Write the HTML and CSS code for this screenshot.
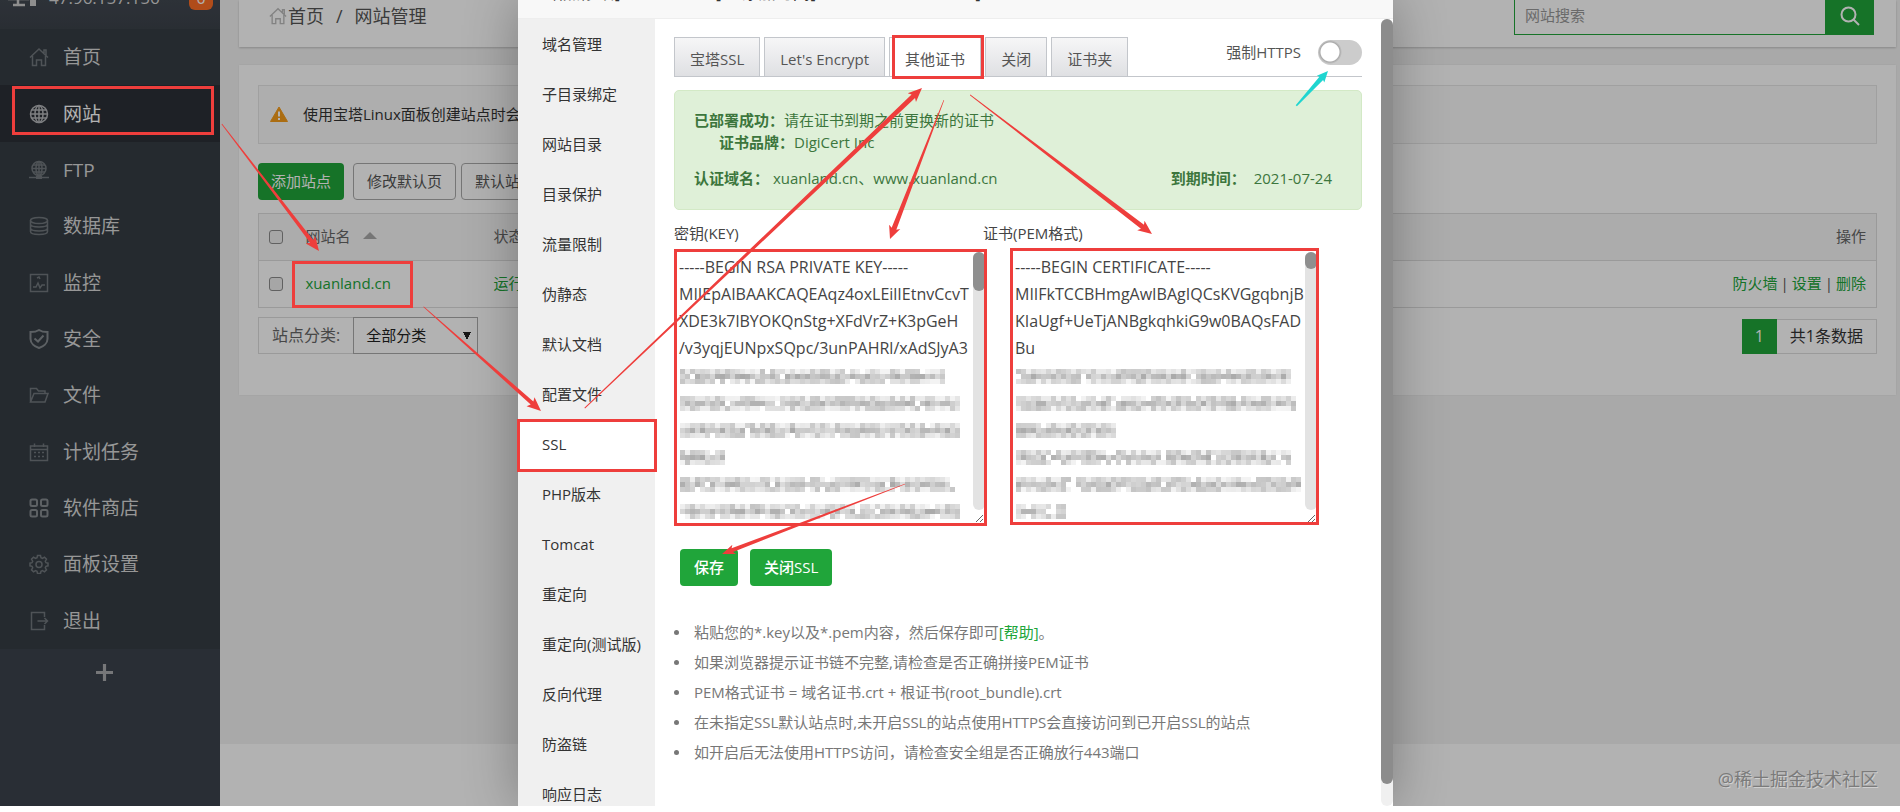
FILE: index.html
```html
<!DOCTYPE html>
<html lang="zh-CN">
<head>
<meta charset="utf-8">
<title>网站管理</title>
<link rel="stylesheet" href="styles.css">
</head>
<body>
<div class="screen">
  <aside class="sidebar">
    <div class="server">
      <svg class="server-icon" viewBox="0 0 28 24" aria-hidden="true"><path d="M1 2h19v14H1zM10 16v5M5 22h12" fill="none" stroke="currentColor" stroke-width="2.500"/><path d="M22 4h6v19h-6z" fill="currentColor"/></svg>
      <span class="server-ip">47.96.157.156</span>
      <span class="server-badge">0</span>
    </div>
    <nav class="menu">
      <a href="#"><svg viewBox="0 0 20 20"><path d="M1 10.500 10 2l9 8.500M15 6V3h2v5M3.500 9v9.500h4V13h5v5.500h4V9"/></svg>首页</a>
      <a href="#" class="active"><svg viewBox="0 0 20 20"><circle cx="10" cy="10" r="8.500"/><ellipse cx="10" cy="10" rx="4" ry="8.500"/><path d="M10 1.500v17M1.500 10h17M3 6h14M3 14h14"/></svg>网站</a>
      <a href="#"><svg viewBox="0 0 20 20"><circle cx="10" cy="8.500" r="7"/><ellipse cx="10" cy="8.500" rx="3" ry="7"/><path d="M10 1.500v14M3 8.500h14M4 5h12M4 12h12M0 17.500h20" /><path d="M7 17.500h6" stroke-width="3"/></svg>FTP</a>
      <a href="#"><svg viewBox="0 0 20 20"><ellipse cx="10" cy="4.500" rx="8.500" ry="3"/><path d="M1.500 4.500v11c0 4 17 4 17 0v-11M1.500 8c0 4 17 4 17 0M1.500 12c0 4 17 4 17 0"/></svg>数据库</a>
      <a href="#"><svg viewBox="0 0 20 20"><path d="M1.500 1.500h17v17h-17zM4 14h3l2-4 2 5 2-3h3M8 5l2-1 1 2"/></svg>监控</a>
      <a href="#"><svg viewBox="0 0 20 20" class="bold"><path d="M10 1c3 2 5 2 8.500 2v7c0 4-4 7.500-8.500 9-4.500-1.500-8.500-5-8.500-9V3C5 3 7 3 10 1z"/><path d="M5.500 9.500 9 12.500l5.500-6"/></svg>安全</a>
      <a href="#"><svg viewBox="0 0 20 20"><path d="M1.500 17V3.500h6l2 2.500H16v2.500M1.500 17 5 8.500h14L16 17z"/></svg>文件</a>
      <a href="#"><svg viewBox="0 0 20 20"><path d="M1.500 4h17v14.500h-17zM1.500 7.500h17M5.500 1.500V5M14.500 1.500V5M5 10.500h2M9 10.500h2M13 10.500h2M5 14.500h2M9 14.500h2M13 14.500h2"/></svg>计划任务</a>
      <a href="#"><svg viewBox="0 0 20 20" class="bold"><rect x="1.500" y="1.500" width="6.500" height="6.500" rx="1.500"/><rect x="12" y="1.500" width="6.500" height="6.500" rx="1.500"/><rect x="1.500" y="12" width="6.500" height="6.500" rx="1.500"/><rect x="12" y="12" width="6.500" height="6.500" rx="1.500"/></svg>软件商店</a>
      <a href="#"><svg viewBox="0 0 20 20"><path d="M8.500 1.500h3l.5 2.300 1.500.7 2-1.300 2 2-1.200 2 .7 1.500 2 .5v2.600l-2 .5-.7 1.500 1.200 2-2 2-2-1.200-1.500.7-.5 2.200h-3L8 17.300l-1.500-.7-2 1.200-2-2 1.200-2-.7-1.500-2-.5V9.200l2-.5.7-1.500-1.200-2 2-2 2 1.300L8 3.800z"/><circle cx="10" cy="10.500" r="3"/></svg>面板设置</a>
      <a href="#"><svg viewBox="0 0 20 20"><path d="M15.500 6V1.500h-13v17h13V14M8.500 10H18M15.500 7l3 3-3 3"/></svg>退出</a>
    </nav>
    <button class="add" aria-label="添加"><svg viewBox="0 0 16 16"><path d="M8 0v16M0 8h16" stroke="currentColor" stroke-width="3"/></svg></button>
  </aside>

  <main class="main">
    <header class="topbar">
      <div class="crumbs">
        <svg viewBox="0 0 20 20" aria-hidden="true"><path d="M1 10.500 10 2l9 8.500M15 6V3h2v5M3.500 9v9.500h4V13h5v5.500h4V9"/></svg>
        <a href="#">首页</a><span class="slash">/</span><span>网站管理</span>
      </div>
      <form class="search">
        <input type="text" placeholder="网站搜索" aria-label="网站搜索">
        <button type="button" aria-label="搜索"><svg viewBox="0 0 20 20"><circle cx="8.500" cy="8.500" r="7"/><path d="M13.500 13.500 19 19"/></svg></button>
      </form>
    </header>

    <section class="panel">
      <div class="notice">
        <svg viewBox="0 0 18 16" aria-hidden="true"><path d="M9 1 17.500 15.500H.5z" fill="#f59c1b" stroke="#f59c1b"/><path d="M9 5.500v5M9 12v2" stroke="#fff" stroke-width="2"/></svg>
        使用宝塔Linux面板创建站点时会自动创建权限
      </div>
      <div class="actions">
        <button class="btn green">添加站点</button>
        <button class="btn plain">修改默认页</button>
        <button class="btn plain">默认站点</button>
      </div>
      <table class="sites">
        <thead><tr><th class="check"><input type="checkbox" aria-label="全选"></th><th class="name">网站名<i class="sort"></i></th><th>状态</th><th class="ops">操作</th></tr></thead>
        <tbody><tr><td class="check"><input type="checkbox" aria-label="选择 xuanland.cn"></td><td><a href="#">xuanland.cn</a></td><td><a href="#">运行中</a></td><td class="ops"><a href="#">防火墙</a><span>|</span><a href="#">设置</a><span>|</span><a href="#">删除</a></td></tr></tbody>
      </table>
      <div class="bottom">
        <div class="filter">
          <label for="category">站点分类:</label>
          <select id="category"><option>全部分类</option></select>
        </div>
        <div class="pages"><span class="current">1</span><span class="total">共1条数据</span></div>
      </div>
    </section>
    <footer class="footer"></footer>
  </main>

  <div class="shade">
    <div class="modal" role="dialog" aria-label="站点修改">
      <header class="modal-head">
        <h2>站点修改[xuanland.cn] -- 添加时间[2020-07-24 11:11:11]</h2>
        <button aria-label="关闭">✕</button>
      </header>
      <div class="modal-body">
        <nav class="tabs-side">
          <a href="#">域名管理</a><a href="#">子目录绑定</a><a href="#">网站目录</a><a href="#">目录保护</a><a href="#">流量限制</a><a href="#">伪静态</a><a href="#">默认文档</a><a href="#">配置文件</a><a href="#" class="on">SSL</a><a href="#">PHP版本</a><a href="#">Tomcat</a><a href="#">重定向</a><a href="#">重定向(测试版)</a><a href="#">反向代理</a><a href="#">防盗链</a><a href="#">响应日志</a>
        </nav>
        <div class="content">
          <div class="tabs">
            <button>宝塔SSL</button><button>Let's Encrypt</button><button class="on">其他证书</button><button>关闭</button><button>证书夹</button>
            <label class="force">强制HTTPS<input type="checkbox"></label>
          </div>
          <div class="success">
            <p><b>已部署成功：</b>请在证书到期之前更换新的证书</p>
            <p class="brand"><b>证书品牌：</b>DigiCert Inc</p>
            <div class="domain"><span><b>认证域名：</b> xuanland.cn、www.xuanland.cn</span><span class="expiry"><b>到期时间：</b>2021-07-24</span></div>
          </div>
          <div class="certs">
            <div class="cert">
              <label for="key">密钥(KEY)</label>
              <div class="box">
<textarea id="key">-----BEGIN RSA PRIVATE KEY-----
MIIEpAIBAAKCAQEAqz4oxLEilIEtnvCcvT
XDE3k7lBYOKQnStg+XFdVrZ+K3pGeH
/v3yqjEUNpxSQpc/3unPAHRl/xAdSJyA3</textarea>
                <svg class="mosaic" data-rows="265,280,280,45,275,280" aria-hidden="true"></svg>
                <span class="bar"><i class="long"></i></span>
              </div>
            </div>
            <div class="cert pem">
              <label for="pem">证书(PEM格式)</label>
              <div class="box">
<textarea id="pem">-----BEGIN CERTIFICATE-----
MIIFkTCCBHmgAwIBAgIQCsKVGgqbnjB
KIaUgf+UeTjANBgkqhkiG9w0BAQsFAD
Bu</textarea>
                <svg class="mosaic" data-rows="275,280,100,275,285,50" aria-hidden="true"></svg>
                <span class="bar"><i class="short"></i></span>
              </div>
            </div>
          </div>
          <div class="save">
            <button class="btn green">保存</button>
            <button class="btn green">关闭SSL</button>
          </div>
          <ul class="tips">
            <li>粘贴您的*.key以及*.pem内容，然后保存即可<a href="#">[帮助]</a>。</li>
            <li>如果浏览器提示证书链不完整,请检查是否正确拼接PEM证书</li>
            <li>PEM格式证书 = 域名证书.crt + 根证书(root_bundle).crt</li>
            <li>在未指定SSL默认站点时,未开启SSL的站点使用HTTPS会直接访问到已开启SSL的站点</li>
            <li>如开启后无法使用HTTPS访问，请检查安全组是否正确放行443端口</li>
          </ul>
        </div>
        <div class="scroll"><i></i></div>
      </div>
    </div>
  </div>
</div>

<svg class="marks" width="1900" height="812" viewBox="0 0 1900 812" aria-hidden="true">
  <g fill="none" stroke="#ee3e3c" stroke-width="3">
    <rect x="13.500" y="87.500" width="199" height="46"/>
    <rect x="293.500" y="262.500" width="118" height="44"/>
    <rect x="518.500" y="420.500" width="137" height="50"/>
    <rect x="893.500" y="36.500" width="89" height="41"/>
    <rect x="675.500" y="250.500" width="310" height="274"/>
    <rect x="1011.500" y="249.500" width="306" height="274"/>
  </g>
  <g fill="#ee3e3c">
    <path transform="translate(319 251) rotate(52.600)" d="M0 0-14-6-12-2-160-.4V.4L-12 2-14 6z"/>
    <path transform="translate(541 411) rotate(41.600)" d="M0 0-14-6-12-2-157-.4V.4L-12 2-14 6z"/>
    <path transform="translate(922 88) rotate(-43.500)" d="M0 0-14-6-12-2.500-465-.5V.5L-12 2.500-14 6z"/>
    <path transform="translate(890 239) rotate(111.200)" d="M0 0-13-6-11-2.500-149-.3V.3L-11 2.500-13 6z"/>
    <path transform="translate(1152 234) rotate(37.400)" d="M0 0-14-6-12-2.500-229-.4V.4L-12 2.500-14 6z"/>
    <path transform="translate(722 554) rotate(159.100)" d="M0 0-13-5-11-2-196-.3V.3L-11 2-13 5z"/>
  </g>
  <path fill="#1fd5d0" transform="translate(1328 71) rotate(-47.600)" d="M0 0-11-5-10-2.500-47-.8V.8L-10 2.500-11 5z"/>
</svg>
<div class="watermark">@稀土掘金技术社区</div>
<script src="mosaic.js"></script>
</body>
</html>
```
FILE: styles.css
```css
* { box-sizing: border-box; }
body {
  margin: 0;
  background: #fff;
  color: #555;
  font: 15px/20px "Open Sans", "Noto Sans CJK SC", sans-serif;
  overflow: hidden;
}
a { color: inherit; text-decoration: none; }
button, input, select, textarea { font: inherit; color: inherit; }
button { border: 0; padding: 0; background: none; cursor: pointer; }
p, h2, ul { margin: 0; padding: 0; }

.screen {
  position: relative;
  display: flex;
  height: calc(100vh - 6px);
  overflow: hidden;
}

/* sidebar */
.sidebar { width: 220px; flex: none; background: #3c424d; color: #d8d8d8; }
.server {
  display: flex;
  align-items: flex-end;
  height: 29px;
  padding: 0 7px 0 8px;
  background: linear-gradient(#414851, #3c424a);
  overflow: hidden;
}
.server-icon { width: 28px; height: 24px; margin-bottom: 22px; color: #ccc; }
.server-ip { flex: 1; margin-left: 13px; margin-bottom: 19px; font-size: 17px; line-height: 24px; }
.server-badge {
  width: 24px;
  height: 24px;
  margin-bottom: 19px;
  border-radius: 6px;
  background: #fc6d26;
  color: #fff;
  font-size: 16px;
  line-height: 24px;
  text-align: center;
}
.menu {
  display: grid;
  grid-auto-rows: 1fr;
  min-height: 620px;
  background: #353d44;
  font-size: 19px;
}
.menu a { display: flex; align-items: center; gap: 14px; padding-left: 29px; }
.menu svg { width: 20px; height: 20px; fill: none; stroke: #72787d; stroke-width: 1.5; }
.menu svg.bold { stroke-width: 2; stroke: #868b90; }
.menu .active { background: #2c3037; color: #fff; }
.menu .active svg { stroke: #b5b7ba; }
.add { display: block; margin: 15px auto 0 96px; color: #a9abae; }
.add svg { display: block; width: 17px; height: 17px; }

/* page */
.main {
  flex: 1;
  min-width: 0;
  display: flex;
  flex-direction: column;
  padding-left: 19px;
  background: #f3f3f3;
}
.topbar {
  display: flex;
  justify-content: space-between;
  align-items: flex-end;
  height: 47px;
  margin-right: 4px;
  padding: 0 22px 12px 30px;
  background: #fff;
  box-shadow: 0 1px 2px rgba(0, 0, 0, .2);
}
.crumbs { display: flex; align-items: center; padding-bottom: 7px; font-size: 18px; line-height: 24px; }
.crumbs svg { width: 18px; height: 18px; margin-right: 1px; fill: none; stroke: #bbb; stroke-width: 1.5; }
.slash { margin: 0 12px; }
.search { display: flex; width: 360px; height: 40px; }
.search input { flex: 1; min-width: 0; padding: 0 10px; border: 1px solid #20a53a; border-right: 0; background: #fff; outline: 0; }
.search input::placeholder { color: #999; }
.search button { width: 49px; background: #20a53a; }
.search svg { width: 20px; height: 20px; margin-top: 6px; fill: none; stroke: #fff; stroke-width: 2; }
.panel { margin: 18px 4px 0 0; padding: 20px 19px 41px; background: #fff; box-shadow: 0 0 2px rgba(0, 0, 0, .08); }
.notice {
  display: flex;
  align-items: center;
  gap: 15px;
  height: 59px;
  padding: 0 0 2px 11px;
  border: 1px solid #e6e6e6;
  background: #fafafa;
  color: #333;
}
.notice svg { width: 18px; height: 16px; }
.actions { display: flex; margin: 19px 0 13px; }
.actions .plain { margin-left: 9px; }
.actions .plain + .plain { margin-left: 5px; }
.btn { height: 37px; padding: 0 13px 2px; border-radius: 4px; }
.green { background: #20a53a; color: #fff; }
.plain { border: 1px solid #aaa; color: #555; }
.sites { width: 100%; border: 1px solid #ddd; border-collapse: collapse; table-layout: fixed; }
.sites th, .sites td { height: 47px; padding: 0 10px 2px; text-align: left; font-weight: 400; border-top: 1px solid #ddd; border-bottom: 1px solid #ddd; white-space: nowrap; }
.sites th { background: #f6f6f6; color: #666; }
.sites .check { width: 37px; padding: 2px 0 0 10px; }
.sites .name { width: 188px; }
.sites .ops { text-align: right; }
.ops span { margin: 0 3px; }
.sites a { color: #20a53a; }
input[type="checkbox"] { appearance: none; width: 14px; height: 14px; margin: 0; border: 1px solid #8c8c8c; border-radius: 3px; background: #eee; }
.sort { display: inline-block; margin-left: 12px; vertical-align: 3px; border: 7px solid transparent; border-top: 0; border-bottom-color: #aaa; }
.bottom { display: flex; justify-content: space-between; align-items: flex-end; margin-top: 9px; }
.filter { display: flex; height: 37px; }
.filter label { padding: 7px 13px; font-size: 16px; line-height: 20px; border: 1px solid #ddd; border-right: 0; color: #666; }
.filter select {
  appearance: none;
  width: 125px;
  padding: 0 12px 2px;
  border: 1px solid #aaa;
  border-radius: 0;
  color: #222;
  background: linear-gradient(to bottom right, #222 50%, transparent 50%) 113px 14px / 4px 8px no-repeat,
    linear-gradient(to bottom left, #222 50%, transparent 50%) 109px 14px / 4px 8px no-repeat, #fff;
}
.pages { display: flex; height: 35px; font-size: 16px; line-height: 34px; color: #333; }
.current { width: 35px; background: #20a53a; color: #fff; text-align: center; }
.total { padding: 0 13px; line-height: 32px; border: 1px solid #ddd; border-left: 0; }
.footer { height: 62px; margin: auto 0 0 -19px; background: #fff; }

/* dialog */
.shade {
  position: absolute;
  inset: 0;
  display: flex;
  justify-content: center;
  padding-left: 11px;
  background: rgba(0, 0, 0, .3);
}
.modal { display: flex; flex-direction: column; width: 875px; background: #fff; color: #333; box-shadow: 0 0 50px rgba(0, 0, 0, .3); }
.modal-head {
  display: flex;
  justify-content: space-between;
  align-items: flex-end;
  height: 19px;
  flex: none;
  padding: 0 24px 14px 28px;
  border-bottom: 1px solid #eee;
  background: #f8f8f8;
  overflow: hidden;
}
.modal-head h2, .modal-head button { font-size: 17px; line-height: 22px; font-weight: 400; color: #333; }
.modal-body { display: flex; flex: 1; min-height: 0; }
.tabs-side { width: 137px; flex: none; background: #f0f0f0; overflow: hidden; }
.tabs-side a { display: block; height: 50px; padding-left: 24px; line-height: 51px; white-space: nowrap; }
.tabs-side .on { background: #fff; }
.content { flex: 1; min-width: 0; padding: 18px 19px 0; overflow: hidden; }
.tabs { display: flex; gap: 4px; height: 40px; border-bottom: 1px solid #c3c6cb; }
.tabs button {
  padding: 4px 15px 0;
  border: 1px solid #c3c6cb;
  border-bottom: 0;
  background: linear-gradient(#f6f6f7, #dfe0e3);
  color: #555;
  white-space: nowrap;
}
.tabs .on { background: #fff; }
.force { display: flex; align-items: center; gap: 17px; height: 30px; margin-left: auto; color: #555; }
.force input {
  width: 44px;
  height: 25px;
  border: 0;
  border-radius: 13px;
  background: radial-gradient(circle at 12px 12px, #fff 9px, #aaa 10px, #ccc 12px);
}
.success { margin-top: 13px; padding: 18px 19px; border: 1px solid #d3e9c6; border-radius: 5px; background: #dff0d8; color: #3c763d; height: 120px; }
.success p { line-height: 22px; }
.success b { font-weight: 700; }
.brand { padding-left: 25px; }
.domain { display: flex; justify-content: space-between; margin-top: 15px; padding-right: 10px; }
.expiry b { margin-right: 8px; }
.certs { display: flex; gap: 23px; margin-top: 13px; }
.cert { width: 313px; }
.cert label { display: block; height: 26px; color: #444; }
.pem label { margin-left: -27px; }
.box { position: relative; height: 277px; padding: 3px; }
.box textarea {
  display: block;
  width: 100%;
  height: 100%;
  padding: 2px;
  border: 0;
  outline: 0;
  background: #fff;
  color: #444;
  font-size: 16px;
  line-height: 27px;
  white-space: pre;
  overflow: hidden;
  resize: both;
}
.mosaic { position: absolute; left: 6px; top: 120px; width: 290px; height: 154px; shape-rendering: crispEdges; }
.bar { position: absolute; right: 2px; top: 3px; bottom: 16px; width: 12px; border-radius: 6px; background: #e3e3e3; }
.bar i { display: block; border-radius: 6px; background: #8f8f8f; }
.bar .long { height: 39px; }
.bar .short { height: 17px; }
.pem { width: 309px; }
.save { display: flex; gap: 12px; margin: 23px 0 0 6px; }
.save .btn { padding: 0 14px 2px; font-weight: 500; }
.tips { margin-top: 31px; color: #777; list-style: none; }
.tips li { display: flex; align-items: center; line-height: 30px; white-space: nowrap; }
.tips li::before { content: ""; width: 5px; height: 5px; margin-right: 15px; border-radius: 50%; background: #777; }
.tips a { color: #20a53a; }
.scroll { width: 12px; flex: none; border-radius: 6px; background: #f0f0f0; }
.scroll i { display: block; height: calc(100% - 22px); border-radius: 6px; background: #8c8c8c; }

/* drawn over the page */
.marks { position: absolute; left: 0; top: 0; pointer-events: none; }
.watermark { position: absolute; right: 22px; bottom: 20px; font-size: 18px; line-height: 26px; color: #7b7b7b; text-shadow: 1px 1px 0 #d0d0d0; }
```
FILE: mosaic.js
```js
// Fills each .mosaic with 5px grey cells that hide the rest of a key.
document.querySelectorAll(".mosaic").forEach(function (svg, n) {
  var seed = 17 + n * 31;
  function random() {
    seed = (seed * 16807) % 2147483647;
    return seed / 2147483647;
  }
  var out = "";
  svg.dataset.rows.split(",").forEach(function (width, row) {
    for (var x = 0; x < Number(width); x += 5) {
      for (var line = 0; line < 3; line++) {
        var tone = line === 1 ? 170 + random() * 50 : 195 + random() * 50;
        if (random() < 0.05) tone = 255;
        var v = Math.round(tone);
        out += '<rect x="' + x + '" y="' + (row * 27 + line * 5) + '" width="5" height="5" fill="rgb(' + v + "," + v + "," + v + ')"/>';
      }
    }
  });
  svg.innerHTML = out;
});
```
